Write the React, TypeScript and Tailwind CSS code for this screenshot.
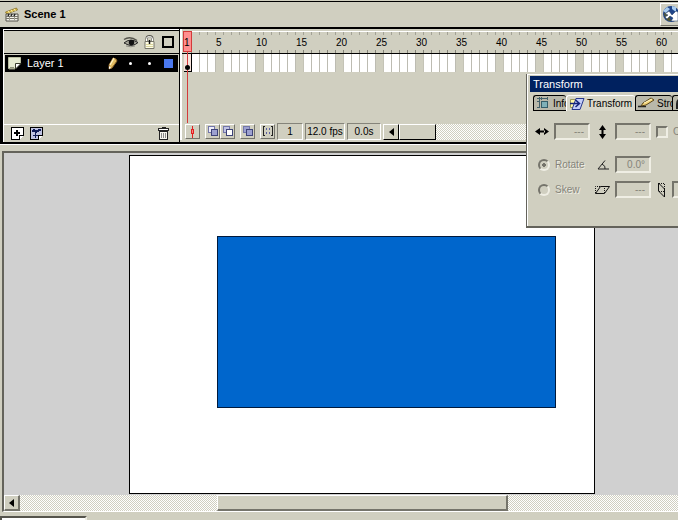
import type { ReactNode } from "react";

const FRAME_COUNT = 62;
const frames = Array.from({ length: FRAME_COUNT }, (_, i) => i + 1);

const raised =
  "shrink-0 flex items-center justify-center bg-[#d0cfc0] border border-t-white border-l-white border-b-[#75746b] border-r-[#75746b]";
const sunken = "border border-t-[#85847a] border-l-[#85847a] border-b-white border-r-white";
const field =
  "shrink-0 w-9 h-[17px] px-1 text-right text-[10px] text-[#85847a] bg-[#d0cfc0] border-2 border-t-[#75746b] border-l-[#75746b] border-b-[#efeee4] border-r-[#efeee4] outline-none";
const dither =
  "bg-[#f4f3ed] bg-[repeating-conic-gradient(#d0cfc0_0_25%,#ffffff_0_50%)] bg-[length:2px_2px]";

function ClapperIcon() {
  return (
    <svg width="14" height="15" viewBox="0 0 14 15">
      <path d="M.5 5 11.500 1l1 2L1.500 7z" fill="#e3c14b" stroke="#7d671f" strokeWidth=".7" />
      <path d="m3 4 1.500 2M6 3l1.500 2M9 2l1.500 2" stroke="#fff3b0" />
      <path d="M1 7h12v7H1z" fill="#f4f3ec" stroke="#55534a" />
      <path d="M1 9.500h12M1 11.500h12" stroke="#77756b" />
      <path d="m3 9 1-2m2 2 1-2m2 2 1-2" stroke="#222" strokeWidth="1.500" />
      <path d="M4.500 10v4M9.500 10v4" stroke="#a09e92" />
    </svg>
  );
}

function EyeIcon() {
  return (
    <svg width="16" height="12" viewBox="0 0 16 12">
      <path d="M1 3.500Q7-.5 14 4.500" fill="none" stroke="#55544c" strokeWidth="1.500" />
      <path d="M1 7Q7 1.500 15 6.500Q10 11 4 8.500Q3 7.500 1 7z" fill="#a9a89c" stroke="#222" />
      <circle cx="8.500" cy="6.500" r="2.700" fill="#111" />
      <path d="M3 10q5 1.500 9 0" fill="none" stroke="#8f8e84" />
    </svg>
  );
}

function LockIcon() {
  return (
    <svg width="11" height="14" viewBox="0 0 11 14">
      <path d="M2.500 7V3.500Q2.500 1 5.500 1T8.500 3.500V7" fill="none" stroke="#55544c" strokeWidth="2" />
      <path d="M2.500 7V3.500Q2.500 1.500 5.500 1.500T8.500 4V7" fill="none" stroke="#fff" />
      <path d="M1 6.500h9v7H1z" fill="#fffde6" stroke="#77756a" />
      <path d="M2 9.500h7M2 11.500h7" stroke="#d8d49c" />
      <path d="M5.500 5v4" stroke="#111" strokeWidth="1.500" />
    </svg>
  );
}

function PageIcon() {
  return (
    <svg width="14" height="13" viewBox="0 0 14 13">
      <path d="M.5.5h12v6l-5 5h-7z" fill="#e6ead0" stroke="#b9bda0" />
      <path d="M13 6.500 7.500 12V6.500z" fill="#fff" stroke="#3a3c2c" />
      <path d="M1 12h6M2 10.500h4" stroke="#8e9078" />
    </svg>
  );
}

function PencilIcon() {
  return (
    <svg width="11" height="13" viewBox="0 0 11 13">
      <path d="m6 1 3 1 1 2-5 7-3 1 0-4z" fill="#e2bd62" stroke="#8a6226" />
      <path d="M7 1 3 8" stroke="#fff3c1" strokeWidth="1.500" />
      <path d="m2 12 0-3 2 2z" fill="#fff" />
    </svg>
  );
}

function NewLayerIcon({ guide }: { guide?: boolean }) {
  return (
    <svg width="14" height="14" viewBox="0 0 14 14" shapeRendering="crispEdges">
      <path d="M.5.5h12v8l-4 4h-8z" fill={guide ? "#bfc3e2" : "#fff"} stroke="#000" />
      <path d="M12.500 8.500h-4v4" fill="#fff" stroke="#000" />
      {guide ? (
        <>
          <path d="m2 5 2-2 2 2 3-2h2" fill="none" stroke="#101c57" strokeWidth="2" />
          <path d="M3 8.500h5M5.500 6v5" fill="none" stroke="#101c57" />
        </>
      ) : (
        <path d="M3 6h6M6 3v6" fill="none" stroke="#000" strokeWidth="2" />
      )}
    </svg>
  );
}

function TrashIcon() {
  return (
    <svg width="12" height="13" viewBox="0 0 12 13" shapeRendering="crispEdges">
      <path d="M4 .5h4" fill="none" stroke="#222" />
      <path d="M.5 1.500h10v2H.5z" fill="#fff" stroke="#222" />
      <path d="M1.500 4.500h8v8h-8z" fill="#f6f5ee" stroke="#222" />
      <path d="M3.500 6v5M5.500 6v5M7.500 6v5" fill="none" stroke="#888" />
    </svg>
  );
}

function OnionIcon({ back, front }: { back: string; front: string }) {
  return (
    <svg width="12" height="11" viewBox="0 0 12 11" shapeRendering="crispEdges">
      <path d="M1.500.5h6v6h-6z" fill={back} stroke="#7377aa" />
      <path d="M4.500 3.500h6v6h-6z" fill={front} stroke="#3e4379" />
    </svg>
  );
}

function MarkersIcon() {
  return (
    <svg width="12" height="11" viewBox="0 0 12 11" shapeRendering="crispEdges">
      <path d="M3 .5H1.500v9H3M9 .5h1.500v9H9" fill="none" stroke="#222" />
      <path d="M4 3h1M7 3h1M4 7h1M7 7h1" fill="none" stroke="#5c60a0" strokeWidth="2" />
    </svg>
  );
}

function ArrowLeft() {
  return (
    <svg width="5" height="8" viewBox="0 0 5 8">
      <path d="M5 0v8L0 4z" fill="#000" />
    </svg>
  );
}

function GlobeArrowIcon() {
  return (
    <svg width="16" height="20" viewBox="0 0 16 20">
      <circle cx="9" cy="9" r="8" fill="#1f4488" />
      <path d="M2 9q1-3 4-1l3 8q-5 1-7-7" fill="#55582f" />
      <path d="m1 6 4-4 3 2-4 4zM10 1l4 1v5l-4-3z" fill="#a9cdf0" />
      <path d="m3 9 4-3 3 4 4-4 2 1v9h-7l2-3-3-2-3 3-2-2 3-2z" fill="#fff" stroke="#15305b" strokeWidth=".5" />
    </svg>
  );
}

function InfoTabIcon() {
  return (
    <svg width="15" height="14" viewBox="0 0 15 14" shapeRendering="crispEdges">
      <path d="M5.500 5.500h6v6h-6z" fill="#7fb0b8" stroke="#355d69" />
      <path d="M1 2.500h11M3.500 1v11M5.500 1v3M11.500 1v3M1 5.500h3M1 11.500h3" fill="none" stroke="#42606a" />
    </svg>
  );
}

function TransformTabIcon() {
  return (
    <svg width="16" height="14" viewBox="0 0 16 14">
      <path d="M1.500 2.500h8v8h-8z" fill="#fff7a6" stroke="#99975b" />
      <path d="M7 1.500h8l-4 11H3z" fill="#c4cef9" stroke="#26378c" />
      <path d="M1 6.500h9M6.500 3l4 3.500-4 3.500" fill="none" stroke="#14247b" strokeWidth="1.500" />
    </svg>
  );
}

function StrokeTabIcon() {
  return (
    <svg width="17" height="12" viewBox="0 0 17 12">
      <path d="M0 9.500h8" stroke="#222" strokeWidth="1.500" />
      <path d="m3 9 2-3 8-5 3 2-8 5z" fill="#f3d477" stroke="#5b471a" />
      <path d="m6 6 8-4" stroke="#fff6c5" />
    </svg>
  );
}

function FillTabIcon() {
  return (
    <svg width="12" height="13" viewBox="0 0 12 13">
      <path d="M1 7q0-6 6-6l4 6-5 5-3-5v5H1z" fill="#222" />
      <path d="m5 4 4 5" stroke="#fff" strokeWidth="2" />
    </svg>
  );
}

function ResizeArrows({ vertical }: { vertical?: boolean }) {
  return vertical ? (
    <svg width="7" height="14" viewBox="0 0 7 14" fill="#000">
      <path d="m3.500 0 3.500 5H0zM3.500 14 0 9h7zM2.500 4h2v6h-2z" />
    </svg>
  ) : (
    <svg width="14" height="7" viewBox="0 0 14 7" fill="#000">
      <path d="m0 3.500 5-3.500v7zM14 3.500 9 0v7zM4 2.500h6v2H4z" />
    </svg>
  );
}

// Frame numbers with a tick at the top and bottom edge of every frame
function Ruler() {
  return (
    <div className="flex h-[22px] overflow-hidden border-t border-white">
      {frames.map((n) => (
        <div key={n} className="flex h-full w-2 shrink-0 flex-col justify-between">
          <span className="h-[3px] w-px shrink-0 self-end bg-[#a3a296]" />
          <span className="relative z-10 text-[10px] leading-3 whitespace-nowrap">
            {n === 1 || n % 5 === 0 ? n : ""}
          </span>
          <span className="h-[3px] w-px shrink-0 self-end bg-[#85847a]" />
        </div>
      ))}
    </div>
  );
}

function FrameRow() {
  return (
    <div className="flex h-[18px] overflow-hidden">
      {frames.map((n) => (
        <div
          key={n}
          className={
            n === 1
              ? "flex w-2 shrink-0 items-end justify-center border-r border-b border-black bg-[#f6e3dc] pb-px"
              : n % 5 === 0
                ? "w-2 shrink-0 border-r border-[#c4c3b6] bg-[#d0cfc0]"
                : "w-2 shrink-0 border-r border-[#bdbcb2] bg-white"
          }
        >
          {n === 1 && <span className="relative z-10 size-[5px] shrink-0 rounded-full bg-black" />}
        </div>
      ))}
    </div>
  );
}

function LayerPanel() {
  return (
    <div className="flex w-[176px] shrink-0 flex-col border-t border-l border-white bg-[#d0cfc0]">
      <div className="flex h-6 items-center border-t border-b border-black pr-[5px]">
        <span className="ml-auto flex">
          <EyeIcon />
        </span>
        <span className="ml-[5px] flex">
          <LockIcon />
        </span>
        <span className="ml-[7px] size-3 border-2 border-black" />
      </div>
      <div className="mt-px mr-px ml-px flex h-[17px] items-center bg-black pr-[5px] pl-[3px] text-white">
        <PageIcon />
        <span className="ml-[5px] text-[11px]">Layer 1</span>
        <span className="ml-auto flex">
          <PencilIcon />
        </span>
        <span className="ml-[11px] size-[3px] rounded-full bg-white" />
        <span className="ml-4 size-[3px] rounded-full bg-white" />
        <span className="ml-[13px] size-[9px] bg-[#4a78ee]" />
      </div>
      <div className="flex-1" />
      <div className="flex h-[18px] items-center gap-[5px] border-t border-white pr-[9px] pl-[7px]">
        <button aria-label="Add layer">
          <NewLayerIcon />
        </button>
        <button aria-label="Add guide layer">
          <NewLayerIcon guide />
        </button>
        <button aria-label="Delete layer" className="ml-auto">
          <TrashIcon />
        </button>
      </div>
    </div>
  );
}

function ToolButton({ label, children }: { label: string; children: ReactNode }) {
  return (
    <button aria-label={label} className={`${raised} size-[15px]`}>
      {children}
    </button>
  );
}

function FramePanel() {
  return (
    <div className="ml-px flex min-w-0 flex-1 flex-col bg-[#d0cfc0]">
      <div className="relative flex h-[94px] flex-col border-l-2 border-white pt-[2px]">
        <div className="border-b border-black pl-[2px]">
          <Ruler />
        </div>
        <div className="pl-[2px]">
          <FrameRow />
        </div>
        {/* Playhead */}
        <svg className="absolute top-[2px] left-px" width="10" height="92" shapeRendering="crispEdges">
          <path d="M.5.5h8v20h-8z" fill="#ff8f8f" stroke="#d43a3a" />
          <path d="M4.500 21v71" fill="none" stroke="#d43a3a" />
        </svg>
      </div>
      <div className="flex h-[17px] items-center border-l-2 border-white pl-[3px] text-[10px]">
        <ToolButton label="Center frame">
          <svg width="7" height="12" viewBox="0 0 7 12" shapeRendering="crispEdges">
            <path d="M3.500 0v12" fill="none" stroke="#e02020" />
            <path d="M2.500 3.500h2v4h-2z" fill="#ff8080" stroke="#e02020" />
          </svg>
        </ToolButton>
        <div className="ml-[5px] flex">
          <ToolButton label="Onion skin">
            <OnionIcon back="#eeeefa" front="#9da1d0" />
          </ToolButton>
          <ToolButton label="Onion skin outlines">
            <OnionIcon back="#c0c3e4" front="#ffffff" />
          </ToolButton>
        </div>
        <div className="ml-[5px] flex gap-[5px]">
          <ToolButton label="Edit multiple frames">
            <OnionIcon back="#9da1d0" front="#9da1d0" />
          </ToolButton>
          <ToolButton label="Modify onion markers">
            <MarkersIcon />
          </ToolButton>
        </div>
        <div className="ml-[2px] flex shrink-0 gap-[2px] text-center leading-[15px]">
          <span className={`${sunken} w-[26px]`}>1</span>
          <span className={`${sunken} w-10 whitespace-nowrap`}>12.0 fps</span>
          <span className={`${sunken} w-[34px]`}>0.0s</span>
        </div>
        <div className={`${dither} ml-[2px] flex h-4 min-w-0 flex-1`}>
          <button aria-label="Scroll timeline left" className={`${raised} w-4 border-b-black border-r-black`}>
            <ArrowLeft />
          </button>
          <span className={`${raised} w-[37px] border-b-black border-r-black`} />
        </div>
      </div>
    </div>
  );
}

function Tab({ label, icon, active, className }: { label?: string; icon: ReactNode; active?: boolean; className: string }) {
  return (
    <button
      role="tab"
      aria-selected={!!active}
      className={`flex h-4 shrink-0 items-center gap-[2px] overflow-hidden rounded-t-[3px] border-t border-l pl-[2px] ${className} ${
        active ? "border-white bg-[#d8d7c9]" : "border-b border-black bg-[#b9b8aa]"
      }`}
    >
      <span className="shrink-0">{icon}</span>
      {label}
    </button>
  );
}

function RadioOption({ label, checked }: { label: string; checked?: boolean }) {
  return (
    <label className="flex w-[59px] shrink-0 items-center gap-[5px]">
      <input
        type="radio"
        name="mode"
        disabled
        defaultChecked={checked}
        className="size-3 shrink-0 appearance-none rounded-full border-2 border-t-[#75746b] border-l-[#75746b] border-b-[#efeee4] border-r-[#efeee4] checked:bg-[radial-gradient(circle,#75746b_2px,transparent_2px)]"
      />
      <span className="[text-shadow:1px_1px_#efeee4]">{label}</span>
    </label>
  );
}

function TransformPanel() {
  return (
    <section className="absolute top-[74px] right-px z-20 w-[152px] overflow-hidden border-b-2 border-l border-b-[#64635b] border-l-[#64635b] bg-[#d0cfc0] text-[10px]">
      <div className="h-[152px] border-t border-l border-white pt-px">
        <h2 className="ml-[2px] h-4 bg-[#00215f] pl-[3px] text-[11px] leading-4 text-white">Transform</h2>
        <div role="tablist" className="mt-[3px] flex pl-[5px]">
          <Tab className="w-[33px]" label="Info" icon={<InfoTabIcon />} />
          <Tab className="w-[69px]" label="Transform" icon={<TransformTabIcon />} active />
          <Tab className="w-[37px]" label="Stroke" icon={<StrokeTabIcon />} />
          <Tab className="w-[34px]" icon={<FillTabIcon />} />
        </div>
        <form className="text-[#85847a]">
          <div className="mt-3 flex h-[17px] items-center pl-[7px]">
            <span className="w-[19px] shrink-0">
              <ResizeArrows />
            </span>
            <input aria-label="Width scale" disabled defaultValue="---" className={field} />
            <span className="flex w-[25px] shrink-0 justify-center">
              <ResizeArrows vertical />
            </span>
            <input aria-label="Height scale" disabled defaultValue="---" className={field} />
            <label className="ml-[5px] flex shrink-0 items-center gap-[5px]">
              <input
                type="checkbox"
                disabled
                className="size-3 appearance-none border-2 border-t-[#75746b] border-l-[#75746b] border-b-[#efeee4] border-r-[#efeee4]"
              />
              Constrain
            </label>
          </div>
          <div className="mt-4 flex h-[17px] items-center pl-[10px]">
            <RadioOption label="Rotate" checked />
            <svg className="mr-[6px] shrink-0" width="12" height="10" viewBox="0 0 12 10">
              <path d="M8 .5 1 9h11M5 4q4 2 3 5" fill="none" stroke="#222" />
            </svg>
            <input aria-label="Rotation" disabled defaultValue="0.0°" className={field} />
          </div>
          <div className="mt-2 flex h-[17px] items-center pl-[10px]">
            <RadioOption label="Skew" />
            <svg className="mr-[5px] -ml-[2px] shrink-0" width="15" height="10" viewBox="0 0 15 10">
              <path d="M5.500 1.500h9l-5 7h-9z" fill="none" stroke="#111" />
              <path d="M.5 8V1.500h5M9.500 8V2" fill="none" stroke="#111" strokeDasharray="1 1" />
            </svg>
            <input aria-label="Horizontal skew" disabled defaultValue="---" className={field} />
            <svg className="mx-[6px] shrink-0" width="9" height="16" viewBox="0 0 9 16">
              <path d="M1.500 1v8l6 6V7z" fill="none" stroke="#111" />
              <path d="M2 1.500h5.500V7M2 9.500h5" fill="none" stroke="#111" strokeDasharray="1 1" />
            </svg>
            <input aria-label="Vertical skew" disabled className={field} />
          </div>
        </form>
      </div>
    </section>
  );
}

export default function App() {
  return (
    <div className="relative flex min-h-screen flex-col overflow-hidden bg-white pr-px font-['Liberation_Sans',Arial,sans-serif] text-black">
      <header className="bg-[#d0cfc0] pt-px">
        <div className="flex h-[26px] items-center border-t border-black pl-[5px]">
          <ClapperIcon />
          <h1 className="ml-[5px] text-[11px] font-bold">Scene 1</h1>
          <button aria-label="Edit scene" className={`${raised} ml-auto h-[23px] w-[18px] border-r-0`}>
            <GlobeArrowIcon />
          </button>
        </div>
      </header>

      <section className="flex h-[117px] border-t-2 border-b-2 border-l-[3px] border-black bg-black">
        <LayerPanel />
        <FramePanel />
      </section>

      <main className="flex flex-1 flex-col border-t border-white bg-[#d0cfc0] pt-[6px]">
        <div className="ml-[2px] flex flex-1 flex-col border-t-2 border-b border-l-2 border-t-[#64635b] border-b-white border-l-[#64635b]">
          <div className="flex-1 bg-[#d0d0d0] pt-[2px] pb-px pl-[125px]">
            {/* Stage */}
            <div className="relative h-[339px] w-[466px] border border-black bg-white">
              <div className="absolute top-20 left-[87px] h-[172px] w-[339px] border border-[#001a3d] bg-[#0066cc]" />
            </div>
          </div>
          <div className={`${dither} flex h-4`}>
            <button
              aria-label="Scroll stage left"
              className={`${raised} w-4 border-r-2 border-b-2 border-r-[#55544c] border-b-[#55544c]`}
            >
              <ArrowLeft />
            </button>
            <span className={`${raised} ml-[197px] w-[291px] border-r-2 border-b-2 border-r-[#55544c] border-b-[#55544c]`} />
          </div>
        </div>
        <footer className="mt-1 h-1 overflow-hidden">
          <select
            aria-label="Zoom"
            className="block h-5 w-[87px] appearance-none border-2 border-t-[#55544c] border-r-[#efeee4] border-b-[#efeee4] border-l-[#55544c] bg-white text-[11px]"
          />
        </footer>
      </main>

      <TransformPanel />
    </div>
  );
}
